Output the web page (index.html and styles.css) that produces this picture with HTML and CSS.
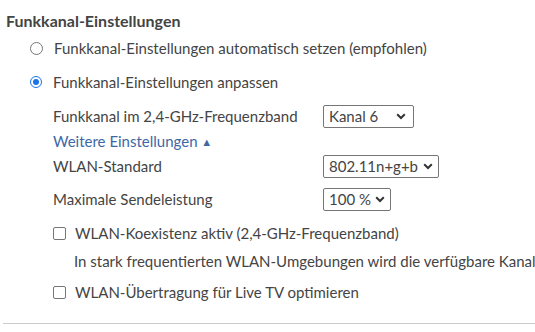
FILE: index.html
```html
<!DOCTYPE html>
<html lang="de">
<head>
<meta charset="utf-8">
<link rel="stylesheet" href="styles.css">
</head>
<body>
<section class="panel">
  <h2 class="title">Funkkanal-Einstellungen</h2>
  <div class="options">
    <label class="radio-row r1"><span class="radio"></span>Funkkanal-Einstellungen automatisch setzen (empfohlen)</label>
    <label class="radio-row r2"><span class="radio checked"></span>Funkkanal-Einstellungen anpassen</label>
    <div class="sub">
      <div class="field f1">
        <span class="label">Funkkanal im 2,4-GHz-Frequenzband</span>
        <span class="select w1"><select><option>Kanal 6</option></select><svg class="chev" viewBox="0 0 10 7" width="10" height="7"><path d="M1.2 1.3 L5 5 L8.8 1.3" fill="none" stroke="#333" stroke-width="2"/></svg></span>
      </div>
      <a class="more">Weitere Einstellungen <span class="tri">&#9650;</span></a>
      <div class="field f2">
        <span class="label">WLAN-Standard</span>
        <span class="select"><select><option>802.11n+g+b</option></select><svg class="chev" viewBox="0 0 10 7" width="10" height="7"><path d="M1.2 1.3 L5 5 L8.8 1.3" fill="none" stroke="#333" stroke-width="2"/></svg></span>
      </div>
      <div class="field f3">
        <span class="label">Maximale Sendeleistung</span>
        <span class="select"><select><option>100 %</option></select><svg class="chev" viewBox="0 0 10 7" width="10" height="7"><path d="M1.2 1.3 L5 5 L8.8 1.3" fill="none" stroke="#333" stroke-width="2"/></svg></span>
      </div>
      <label class="check-row c1"><span class="check"></span>WLAN-Koexistenz aktiv (2,4-GHz-Frequenzband)</label>
      <p class="info">In stark frequentierten WLAN-Umgebungen wird die verfügbare Kanal&shy;bandbreite reduziert.</p>
      <label class="check-row c2"><span class="check"></span>WLAN-Übertragung für Live TV optimieren</label>
    </div>
  </div>
  <hr class="rule">
</section>
</body>
</html>
```
FILE: styles.css
```css
html, body {
  margin: 0;
  padding: 0;
  background: #fff;
  overflow: hidden;
}
body {
  width: 535px;
  height: 332px;
  font-family: "Lato", "Noto Sans", sans-serif;
  font-size: 15px;
  color: #444;
}
.panel {
  padding: 10px 0 0 6px;
  overflow: hidden;
}
.title {
  margin: 0;
  font-size: 16px;
  font-weight: 700;
  color: #444;
  height: 22px;
  line-height: 22px;
}
.options {
  padding-left: 24px;
}
.radio-row {
  display: flex;
  align-items: center;
  gap: 11px;
  height: 24px;
  white-space: nowrap;
}
.r1 { margin-top: 4px; }
.r2 { margin-top: 10px; }
.radio {
  width: 11px;
  height: 11px;
  border: 1px solid #767676;
  border-radius: 50%;
  flex: none;
  box-sizing: content-box;
  position: relative;
}
.radio.checked {
  border-color: #1a73e8;
  width: 10px;
  height: 10px;
  border-width: 1.5px;
}
.radio.checked::after {
  content: "";
  position: absolute;
  left: 2px;
  top: 2px;
  width: 6px;
  height: 6px;
  border-radius: 50%;
  background: #1a73e8;
}
.sub {
  padding-left: 23px;
  padding-top: 10px;
}
.field {
  display: flex;
  align-items: center;
  height: 24px;
  white-space: nowrap;
}
.label {
  width: 270px;
  flex: none;
}
.select {
  position: relative;
  display: inline-flex;
  height: 23px;
  box-sizing: border-box;
  border: 1px solid #767676;
  border-radius: 2px;
  background: #fff;
}
.select select {
  appearance: none;
  -webkit-appearance: none;
  border: 0;
  outline: 0;
  background: transparent;
  font-family: inherit;
  font-size: 15px;
  color: #444;
  padding: 0 19px 0 5px;
  margin: 0;
  height: 100%;
}
.chev {
  position: absolute;
  right: 5px;
  top: 7px;
  pointer-events: none;
}
.w1 { width: 91px; }
.w1 select { width: 100%; }
.w1 .chev { right: 7px; }
.more {
  display: block;
  height: 22px;
  line-height: 22px;
  color: #3d68a6;
  margin-top: 2px;
  cursor: pointer;
}
.tri {
  font-size: 11px;
  vertical-align: 1px;
}
.f2 { margin-top: 2px; }
.f3 { margin-top: 9px; }
.check-row {
  display: flex;
  align-items: center;
  gap: 9px;
  height: 24px;
  white-space: nowrap;
  margin-top: 10px;
}
.check {
  width: 11px;
  height: 11px;
  border: 1px solid #767676;
  border-radius: 2px;
  flex: none;
}
.info {
  margin: 4px 0 0 21px;
  height: 24px;
  line-height: 24px;
  white-space: nowrap;
  overflow: hidden;
}
.c2 { margin-top: 7px; }
.rule {
  margin: 19px 0 0 -3px;
  border: 0;
  border-top: 1px solid #ccc;
  width: 540px;
}
```
